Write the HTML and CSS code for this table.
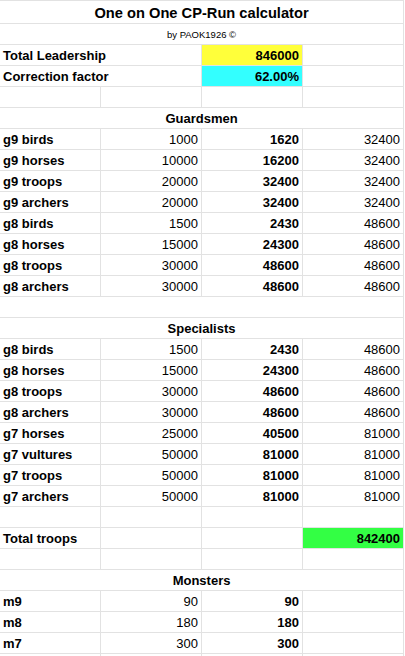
FILE: index.html
```html
<!DOCTYPE html>
<html>
<head>
<meta charset="utf-8">
<link rel="stylesheet" href="styles.css">
</head>
<body>
<table class="sheet">
  <colgroup><col class="c"><col class="c"><col class="c"><col class="c"></colgroup>
  <tr class="title-row"><td colspan="4" class="title">One on One CP-Run calculator</td></tr>
  <tr><td colspan="4" class="byline">by PAOK1926 ©</td></tr>
  <tr><td colspan="2" class="lbl">Total Leadership</td><td class="num b yellow">846000</td><td></td></tr>
  <tr><td colspan="2" class="lbl">Correction factor</td><td class="num b cyan">62.00%</td><td></td></tr>
  <tr><td></td><td></td><td></td><td></td></tr>
  <tr><td colspan="4" class="section">Guardsmen</td></tr>
  <tr><td class="lbl">g9 birds</td><td class="num">1000</td><td class="num b">1620</td><td class="num">32400</td></tr>
  <tr><td class="lbl">g9 horses</td><td class="num">10000</td><td class="num b">16200</td><td class="num">32400</td></tr>
  <tr><td class="lbl">g9 troops</td><td class="num">20000</td><td class="num b">32400</td><td class="num">32400</td></tr>
  <tr><td class="lbl">g9 archers</td><td class="num">20000</td><td class="num b">32400</td><td class="num">32400</td></tr>
  <tr><td class="lbl">g8 birds</td><td class="num">1500</td><td class="num b">2430</td><td class="num">48600</td></tr>
  <tr><td class="lbl">g8 horses</td><td class="num">15000</td><td class="num b">24300</td><td class="num">48600</td></tr>
  <tr><td class="lbl">g8 troops</td><td class="num">30000</td><td class="num b">48600</td><td class="num">48600</td></tr>
  <tr><td class="lbl">g8 archers</td><td class="num">30000</td><td class="num b">48600</td><td class="num">48600</td></tr>
  <tr><td colspan="4"></td></tr>
  <tr><td colspan="4" class="section">Specialists</td></tr>
  <tr><td class="lbl">g8 birds</td><td class="num">1500</td><td class="num b">2430</td><td class="num">48600</td></tr>
  <tr><td class="lbl">g8 horses</td><td class="num">15000</td><td class="num b">24300</td><td class="num">48600</td></tr>
  <tr><td class="lbl">g8 troops</td><td class="num">30000</td><td class="num b">48600</td><td class="num">48600</td></tr>
  <tr><td class="lbl">g8 archers</td><td class="num">30000</td><td class="num b">48600</td><td class="num">48600</td></tr>
  <tr><td class="lbl">g7 horses</td><td class="num">25000</td><td class="num b">40500</td><td class="num">81000</td></tr>
  <tr><td class="lbl">g7 vultures</td><td class="num">50000</td><td class="num b">81000</td><td class="num">81000</td></tr>
  <tr><td class="lbl">g7 troops</td><td class="num">50000</td><td class="num b">81000</td><td class="num">81000</td></tr>
  <tr><td class="lbl">g7 archers</td><td class="num">50000</td><td class="num b">81000</td><td class="num">81000</td></tr>
  <tr><td></td><td></td><td></td><td></td></tr>
  <tr><td class="lbl">Total troops</td><td></td><td></td><td class="num b green">842400</td></tr>
  <tr><td></td><td></td><td></td><td></td></tr>
  <tr><td colspan="4" class="section">Monsters</td></tr>
  <tr><td class="lbl">m9</td><td class="num">90</td><td class="num b">90</td><td></td></tr>
  <tr><td class="lbl">m8</td><td class="num">180</td><td class="num b">180</td><td></td></tr>
  <tr><td class="lbl">m7</td><td class="num">300</td><td class="num b">300</td><td></td></tr>
  <tr><td></td><td></td><td></td><td></td></tr>
</table>
</body>
</html>
```

FILE: styles.css
```css
html, body {
  margin: 0;
  padding: 0;
  background: #ffffff;
}

.sheet {
  border-collapse: separate;
  border-spacing: 0;
  table-layout: fixed;
  width: 404px;
  border-top: 1px solid #e2e2e2;
  font-family: "Liberation Sans", Arial, sans-serif;
  font-size: 13px;
  color: #000000;
}

.c {
  width: 101px;
}

.sheet td {
  box-sizing: border-box;
  height: 21px;
  padding: 2px 3px 0;
  line-height: 18px;
  border-right: 1px solid #e2e2e2;
  border-bottom: 1px solid #e2e2e2;
  white-space: nowrap;
  overflow: hidden;
}

.title-row td {
  height: 23px;
  padding-top: 2px;
  line-height: 20px;
}

.title {
  text-align: center;
  font-weight: bold;
  font-size: 14.67px;
}

.byline {
  text-align: center;
  font-size: 9.5px;
}

.section {
  text-align: center;
  font-weight: bold;
}

.lbl {
  font-weight: bold;
}

.num {
  text-align: right;
}

.b {
  font-weight: bold;
}

.yellow {
  background: #ffff3a;
  border-right-color: #e4e436;
  border-bottom-color: #e4e436;
}

.cyan {
  background: #33ffff;
  border-right-color: #33e0e0;
  border-bottom-color: #33e0e0;
}

.green {
  background: #33ff44;
  border-right-color: #33ff44;
  border-bottom-color: #33e040;
}
```
